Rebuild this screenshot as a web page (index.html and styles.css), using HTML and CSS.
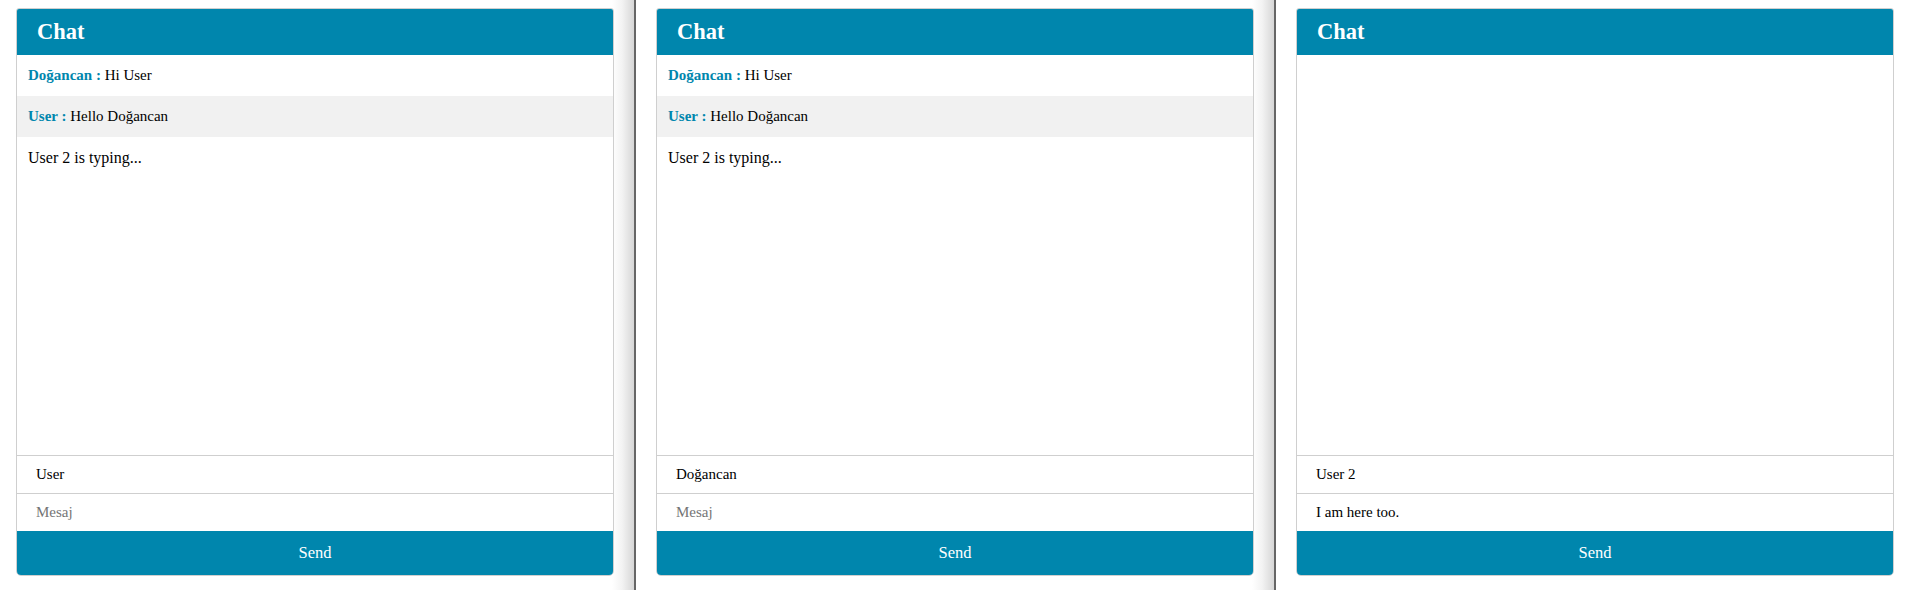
FILE: index.html
```html
<!DOCTYPE html>
<html>
<head>
<meta charset="utf-8">
<link rel="stylesheet" href="styles.css">
</head>
<body>
<div class="screens">
  <div class="pane pane-first">
    <div class="chat">
      <div class="chat-head">Chat</div>
      <div class="chat-body">
        <div class="msg"><span class="who">Doğancan :</span> Hi User</div>
        <div class="msg msg-alt"><span class="who">User :</span> Hello Doğancan</div>
        <div class="typing">User 2 is typing...</div>
      </div>
      <input class="field" type="text" value="User">
      <input class="field" type="text" placeholder="Mesaj">
      <button class="send">Send</button>
    </div>
  </div>
  <div class="divider"></div>
  <div class="pane">
    <div class="chat">
      <div class="chat-head">Chat</div>
      <div class="chat-body">
        <div class="msg"><span class="who">Doğancan :</span> Hi User</div>
        <div class="msg msg-alt"><span class="who">User :</span> Hello Doğancan</div>
        <div class="typing">User 2 is typing...</div>
      </div>
      <input class="field" type="text" value="Doğancan">
      <input class="field" type="text" placeholder="Mesaj">
      <button class="send">Send</button>
    </div>
  </div>
  <div class="divider"></div>
  <div class="pane pane-last">
    <div class="chat">
      <div class="chat-head">Chat</div>
      <div class="chat-body"></div>
      <input class="field" type="text" value="User 2">
      <input class="field" type="text" value="I am here too.">
      <button class="send">Send</button>
    </div>
  </div>
</div>
</body>
</html>
```
FILE: styles.css
```css
html, body {
  margin: 0;
  padding: 0;
  background: #fff;
}
body {
  font-family: "Liberation Serif", "Times New Roman", serif;
  color: #000;
  width: 1906px;
  height: 590px;
  overflow: hidden;
}
.screens {
  display: flex;
  height: 590px;
}
.pane {
  width: 638px;
  box-sizing: border-box;
  padding: 8px 20px 0 20px;
  background: linear-gradient(to right, #fff 0, #fff calc(100% - 22px), #f3f3f3 calc(100% - 12px), #d6d6d6 100%);
}
.pane-first {
  width: 634px;
  padding-left: 16px;
}
.pane-last {
  width: 630px;
  padding-right: 12px;
  background: #fff;
}
.divider {
  width: 2px;
  background: #666;
  flex: none;
}
.chat {
  height: 568px;
  box-sizing: border-box;
  border: 1px solid #cfcfcf;
  border-radius: 3px 3px 5px 5px;
  background: #fff;
  display: flex;
  flex-direction: column;
  overflow: hidden;
}
.chat-head {
  height: 46px;
  flex: none;
  background: #0086ad;
  color: #fff;
  font-family: "Liberation Serif", "Times New Roman", serif;
  font-weight: bold;
  font-size: 22.5px;
  line-height: 46px;
  padding-left: 20px;
}
.chat-body {
  height: 400px;
  flex: none;
}
.msg {
  height: 41px;
  box-sizing: border-box;
  padding: 0 11px;
  font-size: 15px;
  line-height: 41px;
}
.msg-alt {
  background: #f1f1f1;
}
.who {
  color: #0086ad;
  font-weight: bold;
}
.typing {
  padding: 12px 11px;
  font-size: 16px;
  line-height: 18px;
}
.field {
  display: block;
  height: 38px;
  box-sizing: border-box;
  width: 100%;
  border: 0;
  border-top: 1px solid #cfcfcf;
  padding: 0 19px;
  margin: 0;
  font-family: "Liberation Serif", "Times New Roman", serif;
  font-size: 15px;
  color: #000;
  background: #fff;
  outline: none;
}
.field::placeholder {
  color: #757575;
}
.send {
  display: block;
  height: 44px;
  flex: none;
  width: 100%;
  border: 0;
  margin: 0;
  background: #0086ad;
  color: #fff;
  font-family: "Liberation Serif", "Times New Roman", serif;
  font-size: 16.5px;
  cursor: pointer;
}
```
